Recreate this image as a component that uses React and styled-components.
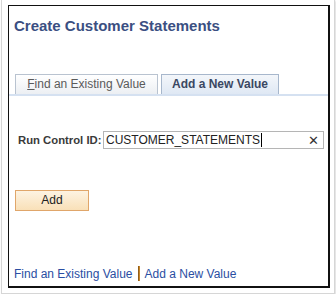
import React from 'react';
import styled, { createGlobalStyle } from 'styled-components';

const GlobalStyle = createGlobalStyle`
  html, body {
    margin: 0;
    padding: 0;
    background: #ffffff;
  }
  body {
    font-family: "Liberation Sans", Arial, sans-serif;
  }
`;

function App() {
  return (
    <>
      <GlobalStyle />
      <StyleShadow>
        <StylePage>
          <StyleTitle>Create Customer Statements</StyleTitle>

          <StyleTabBar>
            <StyleTab>
              <u>F</u>ind an Existing Value
            </StyleTab>
            <StyleTab $active>Add a New Value</StyleTab>
          </StyleTabBar>

          <StyleRow>
            <StyleLabel>Run Control ID:</StyleLabel>
            <StyleField>
              <StyleValue>
                CUSTOMER_STATEMENTS<StyleCaret />
              </StyleValue>
              <StyleClear>✕</StyleClear>
            </StyleField>
          </StyleRow>

          <StyleButton>Add</StyleButton>

          <StyleLinks>
            <StyleLink>Find an Existing Value</StyleLink>
            <StyleSep />
            <StyleLink>Add a New Value</StyleLink>
          </StyleLinks>
        </StylePage>
      </StyleShadow>
    </>
  );
}

const StyleShadow = styled.div`
  box-sizing: border-box;
  width: 334px;
  height: 294px;
  margin-left: 1px;
  padding: 5px 4px 5px 6px;
  border: 1px solid #d6d6d6;
  border-top: none;
  box-shadow: 1px 1px 2px rgba(0, 0, 0, 0.15);
`;

const StylePage = styled.div`
  box-sizing: border-box;
  height: 283px;
  border-top: 1px solid #111;
  border-left: 1px solid #111;
  border-right: 2px solid #111;
  border-bottom: 2px solid #111;
  display: flex;
  flex-direction: column;
`;

const StyleTitle = styled.div`
  margin: 11px 0 0 5px;
  font-size: 15px;
  line-height: 18px;
  font-weight: bold;
  color: #3b4f82;
`;

const StyleTabBar = styled.div`
  display: flex;
  gap: 3px;
  margin-top: 39px;
  padding-left: 6px;
  border-bottom: 2px solid #d5e1f1;
`;

const StyleTab = styled.div`
  box-sizing: border-box;
  height: 20px;
  padding: 0 10px;
  font-size: 12px;
  line-height: 19px;
  border: 1px solid ${(p) => (p.$active ? '#a7b7cc' : '#b9c3d0')};
  border-bottom: none;
  font-weight: ${(p) => (p.$active ? 'bold' : 'normal')};
  color: ${(p) => (p.$active ? '#3a4762' : '#5a5a5a')};
  background: ${(p) =>
    p.$active
      ? 'linear-gradient(#f3f6fa, #dfe8f4)'
      : 'linear-gradient(#ffffff, #eceff3)'};
  min-width: ${(p) => (p.$active ? '117px' : '143px')};
  text-align: center;

  u {
    text-decoration: underline;
  }
`;

const StyleRow = styled.div`
  display: flex;
  align-items: center;
  margin-top: 35px;
  padding-left: 9px;
`;

const StyleLabel = styled.div`
  width: 85px;
  font-size: 11.3px;
  font-weight: bold;
  color: #3a3a3a;
  white-space: nowrap;
`;

const StyleField = styled.div`
  box-sizing: border-box;
  width: 221px;
  height: 18px;
  border: 1px solid #b5b5b5;
  display: flex;
  align-items: center;
  justify-content: space-between;
  padding: 0 4px 0 2px;
`;

const StyleValue = styled.div`
  display: flex;
  align-items: center;
  font-size: 12px;
  color: #222;
`;

const StyleCaret = styled.span`
  display: inline-block;
  width: 1px;
  height: 14px;
  background: #000;
  margin-left: 1px;
`;

const StyleClear = styled.span`
  font-size: 13px;
  color: #333;
`;

const StyleButton = styled.div`
  box-sizing: border-box;
  width: 74px;
  height: 21px;
  margin: 41px 0 0 6px;
  border: 1px solid #e0a66a;
  background: linear-gradient(#fdf3e2, #f9e0b8);
  font-size: 12px;
  line-height: 19px;
  text-align: center;
  color: #222;
  cursor: pointer;
`;

const StyleLinks = styled.div`
  display: flex;
  align-items: center;
  margin: auto 0 5px 5px;
  font-size: 12px;
`;

const StyleLink = styled.span`
  color: #2a4ea2;
  cursor: pointer;
`;

const StyleSep = styled.span`
  width: 2px;
  height: 15px;
  margin: 0 5px;
  background: linear-gradient(90deg, #7a4a10, #e09a30);
`;

export default App;
